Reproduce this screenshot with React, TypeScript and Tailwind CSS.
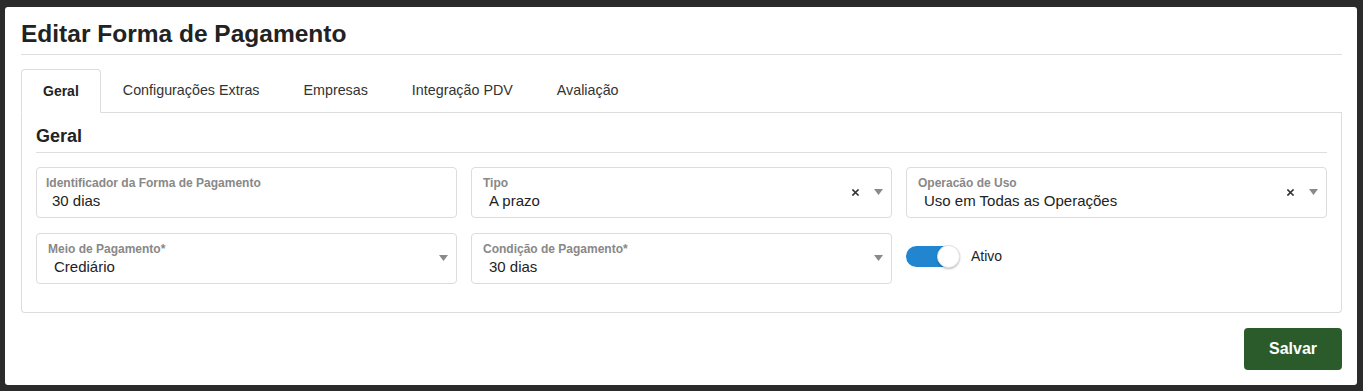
import React from "react";

const font = { fontFamily: '"Liberation Sans", Arial, sans-serif' };

function Caret() {
  return (
    <svg width="9" height="6" viewBox="0 0 9 6" className="shrink-0">
      <path d="M0 0 L9 0 L4.5 6 Z" fill="#8a8a8a" />
    </svg>
  );
}

function Clear() {
  return (
    <svg width="7" height="7" viewBox="0 0 7 7" className="shrink-0">
      <path d="M1 1 L6 6 M6 1 L1 6" stroke="#333" strokeWidth="1.6" strokeLinecap="square" />
    </svg>
  );
}

function Field({
  label,
  value,
  clear,
  caret,
  labelPad = "pl-[11px]",
}: {
  label: string;
  value: string;
  clear?: boolean;
  caret?: boolean;
  labelPad?: string;
}) {
  return (
    <div className="h-[51px] border border-[#dcdcdc] rounded-[4px] flex items-center pr-[8px]">
      <div className={`flex-1 flex flex-col pt-[1px] ${labelPad}`}>
        <div className="text-[12px] leading-[14px] font-bold text-[#888]">{label}</div>
        <div className="mt-[2px] pl-[6px] text-[15px] leading-[18px] text-[#222]">{value}</div>
      </div>
      {clear && (
        <div className="mr-[15px] mt-[-1px] flex items-center">
          <Clear />
        </div>
      )}
      {caret && (
        <div className="mt-[-1px] flex items-center">
          <Caret />
        </div>
      )}
    </div>
  );
}

export default function App() {
  const tabs = ["Configurações Extras", "Empresas", "Integração PDV", "Avaliação"];
  return (
    <div style={font} className="bg-[#2b2b2b] h-[391px] pt-[7px] pl-[5px] pr-[6px]">
      <div className="bg-white rounded-[3px] h-[378px] pl-[16px] pr-[15px] pt-[12px]">
        <h1 className="text-[24.5px] leading-[30px] font-bold text-[#222]">Editar Forma de Pagamento</h1>
        <div className="mt-[5px] border-b border-[#dedede]" />

        <div className="mt-[14px] flex h-[44px] border-b border-[#dcdcdc]">
          <div className="h-[44px] border border-[#dcdcdc] border-b-white rounded-t-[4px] bg-white px-[21px] flex items-center text-[14px] font-bold text-[#222]">
            Geral
          </div>
          {tabs.map((t) => (
            <div
              key={t}
              className="h-[43px] border border-transparent px-[21px] flex items-center text-[14.3px] text-[#333]"
            >
              {t}
            </div>
          ))}
        </div>

        <div className="border-x border-b border-[#dcdcdc] rounded-b-[4px] px-[14px] pt-[11px] pb-[28px]">
          <h2 className="text-[18px] leading-[24px] font-bold text-[#222]">Geral</h2>
          <div className="mt-[4px] border-b border-[#dedede]" />
          <div className="mt-[14px] grid grid-cols-3 gap-x-[14px] gap-y-[15px]">
            <Field label="Identificador da Forma de Pagamento" value="30 dias" labelPad="pl-[9px]" />
            <Field label="Tipo" value="A prazo" clear caret />
            <Field label="Operacão de Uso" value="Uso em Todas as Operações" clear caret />
            <Field label="Meio de Pagamento*" value="Crediário" caret />
            <Field label="Condição de Pagamento*" value="30 dias" caret />
            <div className="flex items-center pb-[4px]">
              <div className="relative w-[53px] h-[21px] rounded-full bg-[#2185d0]">
                <div className="absolute right-[-1px] top-[-1px] w-[23px] h-[23px] rounded-full bg-white border border-[#e2e2e2] shadow-[0_1px_2px_rgba(0,0,0,0.25)]" />
              </div>
              <span className="ml-[12px] text-[14px] text-[#222]">Ativo</span>
            </div>
          </div>
        </div>

        <div className="flex justify-end mt-[15px]">
          <button className="w-[98px] h-[42px] rounded-[4px] bg-[#2b5b2b] text-white text-[16px] font-bold">
            Salvar
          </button>
        </div>
      </div>
    </div>
  );
}
